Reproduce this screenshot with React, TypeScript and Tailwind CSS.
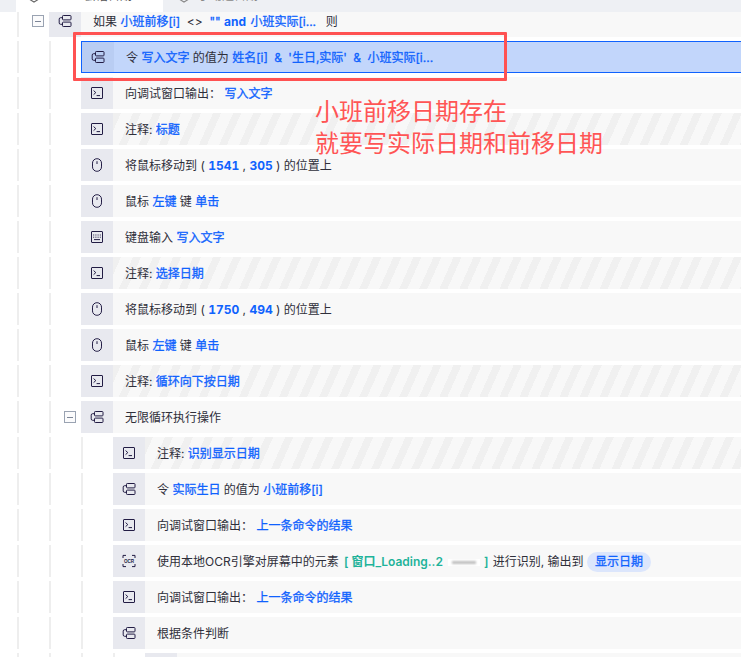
import React from "react";

const B = ({ children }: { children: React.ReactNode }) => (
  <span className="text-[#0f62fe] [-webkit-text-stroke:0.3px_#0f62fe]">{children}</span>
);
const N = ({ children }: { children: React.ReactNode }) => (
  <span className="font-bold tabular-nums text-[#0f62fe]">{children}</span>
);

const Flow = () => (
  <svg width="14" height="14" viewBox="0 0 14 14" fill="none" stroke="#221c44" strokeWidth="1">
    <rect x="4.5" y="1.5" width="8.5" height="4.4" rx="0.8" />
    <rect x="4.5" y="8.1" width="8.5" height="4.4" rx="0.8" />
    <path d="M4.5 3.7H2.6a1.4 1.4 0 0 0-1.4 1.4v3.8a1.4 1.4 0 0 0 1.4 1.4h1.9" />
  </svg>
);
const Term = () => (
  <svg width="14" height="14" viewBox="0 0 14 14" fill="none" stroke="#221c44" strokeWidth="1">
    <rect x="1.5" y="1.5" width="11" height="11" rx="0.5" />
    <path d="M3.6 4.6 5.8 6.6 3.6 8.6M6.6 9.6h3.4" />
  </svg>
);
const Mouse = () => (
  <svg width="14" height="14" viewBox="0 0 14 14" fill="none" stroke="#221c44" strokeWidth="1">
    <rect x="2.5" y="0.7" width="9" height="12.6" rx="4.4" />
    <path d="M7 3.2v2.8" />
  </svg>
);
const Keys = () => (
  <svg width="14" height="14" viewBox="0 0 14 14" fill="none" stroke="#221c44" strokeWidth="1">
    <rect x="1.5" y="1.5" width="11" height="11" rx="0.5" />
    <path d="M3.2 5h1M5.4 5h1M7.6 5h1M9.8 5h1M3.2 7.2h1M5.4 7.2h1M7.6 7.2h1M9.8 7.2h1M4 9.6h6" />
  </svg>
);
const Ocr = () => (
  <svg width="14" height="14" viewBox="0 0 14 14" fill="none" stroke="#221c44" strokeWidth="1">
    <path d="M1 4V1.4h3M10 1.4h3V4M1 10v2.6h3M10 12.6h3V10" />
    <text x="7" y="8.6" textAnchor="middle" fontSize="4.6" fontWeight="700" fill="#221c44" stroke="none" fontFamily="Liberation Sans, sans-serif">OCR</text>
  </svg>
);
const Hex = ({ color }: { color: string }) => (
  <svg width="12" height="14" viewBox="0 0 12 14" fill="none" stroke={color} strokeWidth="1.1">
    <path d="M6 1 11 4v6l-5 3-5-3V4z" />
  </svg>
);

const Toggle = () => (
  <span className="flex h-[12px] w-[12px] items-center justify-center border border-[#9aa3b2] bg-[#fbfbfc]">
    <span className="h-px w-[6px] bg-[#7d8697]" />
  </span>
);

type RowProps = {
  depth: number;
  icon: React.ReactNode;
  children?: React.ReactNode;
  striped?: boolean;
  selected?: boolean;
  toggle?: boolean;
};

const widths = ["w-[49px]", "w-[81px]", "w-[113px]", "w-[145px]"];

const Row = ({ depth, icon, children, striped, selected, toggle }: RowProps) => (
  <div className="flex h-8 shrink-0">
    <div className={`relative shrink-0 ${widths[depth]}`}>
      <span className="absolute bottom-0 left-[17px] top-0 w-[1.5px] bg-[#eeeeee]" />
      {depth > 0 && <span className="absolute bottom-0 left-[49px] top-0 w-[1.5px] bg-[#eeeeee]" />}
      {depth > 1 && <span className="absolute bottom-0 left-[81px] top-0 w-[1.5px] bg-[#eeeeee]" />}
      {depth > 2 && <span className="absolute bottom-0 left-[113px] top-0 w-[1.5px] bg-[#eeeeee]" />}
      {toggle && (
        <span className="absolute right-[5px] top-[10px]">
          <Toggle />
        </span>
      )}
    </div>
    <div
      className={`flex min-w-0 flex-1 items-center ${
        selected ? "border-y border-l border-[#0f62fe] bg-[#c2d6fb]" : "bg-[#f8f8f8]"
      }`}
    >
      <div
        className={`flex h-full w-8 shrink-0 items-center justify-center ${
          selected ? "bg-[#b9cdf3]" : "bg-[#e8e9ef]"
        }`}
      >
        {icon}
      </div>
      <div
        className={`flex h-full flex-1 items-center whitespace-pre pl-3 pt-[2px] text-[12px] text-[#2f2f3a] ${
          striped
            ? "bg-[repeating-linear-gradient(114deg,#f0f0f0_0px,#f0f0f0_7.3px,#f8f8f8_7.3px,#f8f8f8_18.3px)]"
            : ""
        }`}
      >
        <span className="inline-flex items-center">{children}</span>
      </div>
    </div>
  </div>
);

export default function App() {
  return (
    <div
      className="relative h-[657px] w-[741px] overflow-hidden bg-white"
      style={{ fontFamily: '"Inter", "Noto Sans CJK SC", sans-serif' }}
    >
      <div className="relative z-10 flex h-[12px] items-start bg-[#eef0f4]">
        <div className="ml-[16px] flex h-[12px] w-[147px] items-start overflow-hidden bg-white pl-[12px]">
          <span className="-mt-[11px] shrink-0">
            <Hex color="#666" />
          </span>
          <span className="-mt-[12px] ml-[20px] text-[12px] leading-[16px] text-[#555]">个人会话日期</span>
        </div>
        <div className="ml-[15px] flex h-[12px] items-start overflow-hidden">
          <span className="-mt-[11px] shrink-0">
            <Hex color="#888" />
          </span>
          <span className="-mt-[12px] ml-[8px] text-[12px] leading-[16px] text-[#888]">手动选日期</span>
        </div>
      </div>

      <div className="-mt-[7px] flex flex-col gap-1">
        <Row depth={0} icon={<Flow />} toggle>
          <span className="whitespace-pre">
            如果 <B>小班前移[i]</B>{"  <>  "}<B>""</B> <N>and</N> <span className="ml-[1px]"><B>小班实际[i...</B></span>{"  "}<span className="ml-[3px]">则</span>
          </span>
        </Row>
        <Row depth={1} icon={<Flow />} selected>
          <span className="whitespace-pre">
            令 <B>写入文字</B> 的值为 <span className="[word-spacing:3px]"><B>姓名[i] &amp; '生日,实际' &amp; 小班实际[i...</B></span>
          </span>
        </Row>
        <Row depth={1} icon={<Term />}>
          <span className="whitespace-pre">向调试窗口输出： <B>写入文字</B></span>
        </Row>
        <Row depth={1} icon={<Term />} striped>
          <span className="whitespace-pre">注释: <B>标题</B></span>
        </Row>
        <Row depth={1} icon={<Mouse />}>
          <span className="whitespace-pre">将鼠标移动到 ( <N>1541</N> , <N>305</N> ) 的位置上</span>
        </Row>
        <Row depth={1} icon={<Mouse />}>
          <span className="whitespace-pre">鼠标 <B>左键</B> 键 <B>单击</B></span>
        </Row>
        <Row depth={1} icon={<Keys />}>
          <span className="whitespace-pre">键盘输入 <B>写入文字</B></span>
        </Row>
        <Row depth={1} icon={<Term />} striped>
          <span className="whitespace-pre">注释: <B>选择日期</B></span>
        </Row>
        <Row depth={1} icon={<Mouse />}>
          <span className="whitespace-pre">将鼠标移动到 ( <N>1750</N> , <N>494</N> ) 的位置上</span>
        </Row>
        <Row depth={1} icon={<Mouse />}>
          <span className="whitespace-pre">鼠标 <B>左键</B> 键 <B>单击</B></span>
        </Row>
        <Row depth={1} icon={<Term />} striped>
          <span className="whitespace-pre">注释: <B>循环向下按日期</B></span>
        </Row>
        <Row depth={1} icon={<Flow />} toggle>
          无限循环执行操作
        </Row>
        <Row depth={2} icon={<Term />} striped>
          <span className="whitespace-pre">注释: <B>识别显示日期</B></span>
        </Row>
        <Row depth={2} icon={<Flow />}>
          <span className="whitespace-pre">令 <B>实际生日</B> 的值为 <B>小班前移[i]</B></span>
        </Row>
        <Row depth={2} icon={<Term />}>
          <span className="whitespace-pre">向调试窗口输出： <B>上一条命令的结果</B></span>
        </Row>
        <Row depth={2} icon={<Ocr />}>
          <span className="whitespace-pre">使用本地OCR引擎对屏幕中的元素 </span>
          <span className="ml-[2px] whitespace-pre font-semibold text-[#1fb39a]">[ 窗口_Loading..2</span>
          <span className="ml-[5px] mr-[4px] flex h-[7px] w-[32px] items-center justify-center bg-white">
            <span className="h-[3px] w-[24px] bg-[#bdbdbd] blur-[1px]" />
          </span>
          <span className="font-semibold text-[#1fb39a]">]</span>
          <span className="ml-[1px] whitespace-pre"> 进行识别, 输出到 </span>
          <span className="inline-flex h-5 items-center rounded-full bg-[#dce6fc] px-2 text-[#0f62fe] [-webkit-text-stroke:0.3px_#0f62fe]">显示日期</span>
        </Row>
        <Row depth={2} icon={<Term />}>
          <span className="whitespace-pre">向调试窗口输出： <B>上一条命令的结果</B></span>
        </Row>
        <Row depth={2} icon={<Flow />}>
          根据条件判断
        </Row>
        <Row depth={3} icon={null} />
      </div>

      <div className="absolute left-[73px] top-[32px] z-20 h-[49px] w-[434px] rounded-[1px] border-[3px] border-[#ff5252]" />
      <div className="absolute left-[315px] top-[96px] z-20 text-[24px] leading-[32px] text-[#ff5555]">
        <div>小班前移日期存在</div>
        <div>就要写实际日期和前移日期</div>
      </div>
    </div>
  );
}
